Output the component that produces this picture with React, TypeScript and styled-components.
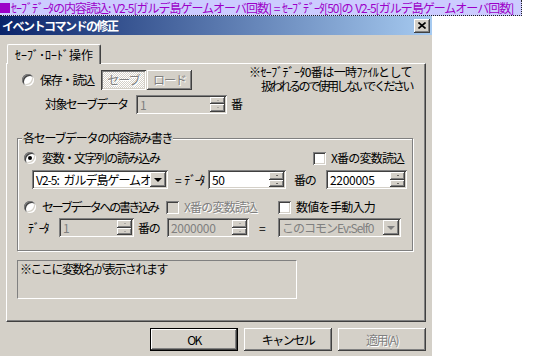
import styled, { createGlobalStyle } from 'styled-components';

const FACE = '#d4d0c8';
const SHADOW = '#808080';
const DARK = '#404040';

const raisedEdge = `
  box-shadow: inset -1px -1px 0 ${DARK}, inset 1px 1px 0 #fff, inset -2px -2px 0 ${SHADOW}, inset 2px 2px 0 ${FACE};
`;
const sunkenEdge = `
  box-shadow: inset 1px 1px 0 ${SHADOW}, inset -1px -1px 0 #fff, inset 2px 2px 0 ${DARK}, inset -2px -2px 0 ${FACE};
`;
const pressedEdge = `
  box-shadow: inset 1px 1px 0 ${DARK}, inset -1px -1px 0 #fff, inset 2px 2px 0 ${SHADOW}, inset -2px -2px 0 ${FACE};
`;
const disabledText = `
  color: ${SHADOW};
  text-shadow: 1px 1px 0 #fff;
`;

const GlobalStyle = createGlobalStyle`
  html, body {
    margin: 0;
    padding: 0;
    background: #fff;
  }
  body {
    font-family: "Noto Sans CJK JP", "Noto Sans", sans-serif;
    font-size: 12px;
    line-height: 14px;
    color: #000;
  }
`;

const Page = styled.div`
  width: 536px;
  height: 356px;
  overflow: hidden;
  display: flex;
  flex-direction: column;
  align-items: flex-start;
`;

const Banner = styled.div`
  box-sizing: border-box;
  width: 522px;
  height: 16px;
  display: flex;
  align-items: center;
  background: #ccccff;
  color: #9c00c8;
  border-right: 1px dotted #222;
  border-bottom: 1px dotted #222;
  letter-spacing: -1px;
  word-spacing: 1px;
  white-space: nowrap;
  overflow: hidden;
`;

const BannerMark = styled.span`
  flex: none;
  width: 10px;
  height: 10px;
  margin-right: 1px;
  background: #9c00c8;
`;

const Dialog = styled.div`
  width: 432px;
  flex: 1;
  background: ${FACE};
  display: flex;
  flex-direction: column;
`;

const TitleBar = styled.div`
  flex: none;
  height: 19px;
  display: flex;
  align-items: center;
  justify-content: space-between;
  padding: 0 2px;
  background: linear-gradient(to right, #0a246a, #a6caf0);
`;

const Title = styled.span`
  color: #fff;
  font-weight: bold;
  letter-spacing: -1.5px;
`;

const CloseButton = styled.div`
  box-sizing: border-box;
  width: 16px;
  height: 14px;
  background: ${FACE};
  ${raisedEdge}
  display: flex;
  align-items: center;
  justify-content: center;
`;

const Body = styled.div`
  padding: 9px 6px 0;
  display: flex;
  flex-direction: column;
`;

const TabStrip = styled.div`
  display: flex;
  height: 19px;
  padding-left: 1px;
`;

const Tab = styled.div`
  position: relative;
  z-index: 1;
  box-sizing: border-box;
  width: 94px;
  height: 20px;
  background: ${FACE};
  border-top: 1px solid #fff;
  border-left: 1px solid #fff;
  border-right: 1px solid ${DARK};
  box-shadow: inset -1px 0 0 ${SHADOW};
  border-radius: 2px 2px 0 0;
  display: flex;
  align-items: center;
  justify-content: center;
`;

const TabPanel = styled.div`
  box-sizing: border-box;
  width: 420px;
  height: 259px;
  border-top: 1px solid #fff;
  border-left: 1px solid #fff;
  border-right: 1px solid ${DARK};
  border-bottom: 1px solid ${DARK};
  box-shadow: inset -1px -1px 0 ${SHADOW};
  display: flex;
  flex-direction: column;
  align-items: flex-start;
`;

const TopArea = styled.div`
  display: flex;
  width: 100%;
`;

const LeftColumn = styled.div`
  flex: none;
  width: 242px;
  padding-top: 6px;
  display: flex;
  flex-direction: column;
  gap: 5px;
`;

const Note = styled.div`
  padding-top: 1px;
  display: flex;
  flex-direction: column;
  white-space: nowrap;
`;

const NoteLine = styled.span<{ $indent?: number; $ls: number }>`
  height: 14px;
  padding-left: ${(p) => p.$indent ?? 0}px;
  letter-spacing: ${(p) => p.$ls}px;
`;

const Row = styled.div<{ $indent: number; $h: number; $top?: number }>`
  display: flex;
  align-items: center;
  height: ${(p) => p.$h}px;
  padding-left: ${(p) => p.$indent}px;
  margin-top: ${(p) => p.$top ?? 0}px;
`;

const Label = styled.span<{ $w?: number; $pad?: number; $ls?: number; $disabled?: boolean }>`
  flex: none;
  box-sizing: border-box;
  width: ${(p) => (p.$w ? `${p.$w}px` : 'auto')};
  padding-left: ${(p) => p.$pad ?? 0}px;
  white-space: nowrap;
  letter-spacing: ${(p) => p.$ls ?? -1.2}px;
  word-spacing: 3px;
  ${(p) => (p.$disabled ? disabledText : '')}
`;

const Option = styled.label<{ $w?: number; $gap: number; $ls?: number; $disabled?: boolean }>`
  flex: none;
  display: flex;
  align-items: center;
  gap: ${(p) => p.$gap}px;
  width: ${(p) => (p.$w ? `${p.$w}px` : 'auto')};
  white-space: nowrap;
  letter-spacing: ${(p) => p.$ls ?? -1.2}px;
  ${(p) => (p.$disabled ? disabledText : '')}
`;

const RadioCircle = styled.span<{ $checked?: boolean }>`
  flex: none;
  box-sizing: border-box;
  width: 12px;
  height: 12px;
  border-radius: 50%;
  background: #fff;
  box-shadow: inset 1px 1px 0 ${SHADOW}, inset -1px -1px 0 #fff, inset 2px 2px 0 ${DARK},
    inset -2px -2px 0 ${FACE};
  display: flex;
  align-items: center;
  justify-content: center;

  &::after {
    content: '';
    display: ${(p) => (p.$checked ? 'block' : 'none')};
    width: 4px;
    height: 4px;
    border-radius: 50%;
    background: #000;
  }
`;

const CheckBox = styled.span<{ $disabled?: boolean }>`
  flex: none;
  box-sizing: border-box;
  width: 13px;
  height: 13px;
  background: ${(p) => (p.$disabled ? FACE : '#fff')};
  ${sunkenEdge}
`;

const ButtonPair = styled.div`
  display: flex;
  gap: 1px;
`;

const SmallButton = styled.div<{ $pressed?: boolean }>`
  box-sizing: border-box;
  width: 45px;
  height: 20px;
  display: flex;
  align-items: center;
  justify-content: center;
  letter-spacing: -1px;
  ${disabledText}
  background: ${(p) =>
    p.$pressed ? `repeating-conic-gradient(#fff 0 25%, ${FACE} 0 50%) 0 0 / 2px 2px` : FACE};
  ${(p) => (p.$pressed ? pressedEdge : raisedEdge)}
`;

const Field = styled.div<{ $w: number; $disabled?: boolean }>`
  flex: none;
  box-sizing: border-box;
  width: ${(p) => p.$w}px;
  height: 19px;
  padding: 2px;
  display: flex;
  background: ${(p) => (p.$disabled ? FACE : '#fff')};
  ${sunkenEdge}
`;

const FieldText = styled.span<{ $disabled?: boolean }>`
  flex: 1;
  min-width: 0;
  overflow: hidden;
  white-space: nowrap;
  padding-left: 2px;
  line-height: 15px;
  letter-spacing: -0.3px;
  color: ${(p) => (p.$disabled ? SHADOW : '#000')};
`;

const ComboText = styled(FieldText)`
  letter-spacing: -1px;
  word-spacing: 3px;
`;

const SpinButtons = styled.div`
  flex: none;
  width: 15px;
  display: flex;
  flex-direction: column;
`;

const SpinButton = styled.div`
  flex: 1;
  background: ${FACE};
  ${raisedEdge}
  display: flex;
  align-items: center;
  justify-content: center;
`;

const SpinArrow = styled.span<{ $up?: boolean; $disabled?: boolean }>`
  width: 0;
  height: 0;
  border-left: 1px solid transparent;
  border-right: 1px solid transparent;
  ${(p) =>
    p.$up
      ? `border-bottom: 1px solid ${p.$disabled ? SHADOW : '#000'};`
      : `border-top: 1px solid ${p.$disabled ? SHADOW : '#000'};`}
`;

const DropButton = styled.div`
  flex: none;
  width: 16px;
  background: ${FACE};
  ${raisedEdge}
  display: flex;
  align-items: center;
  justify-content: center;
`;

const DropArrow = styled.span<{ $disabled?: boolean }>`
  width: 0;
  height: 0;
  border-left: 4px solid transparent;
  border-right: 4px solid transparent;
  border-top: 4px solid ${(p) => (p.$disabled ? SHADOW : '#000')};
`;

const Group = styled.div`
  position: relative;
  box-sizing: border-box;
  width: 396px;
  height: 113px;
  margin: 25px 0 0 10px;
  padding-top: 12px;
  border: 1px solid ${SHADOW};
  box-shadow: inset 1px 1px 0 #fff, 1px 1px 0 #fff;
  display: flex;
  flex-direction: column;
`;

const Legend = styled.span`
  position: absolute;
  top: -8px;
  left: 4px;
  padding: 0 1px;
  background: ${FACE};
  letter-spacing: -1.3px;
  white-space: nowrap;
`;

const InfoBox = styled.div`
  box-sizing: border-box;
  width: 280px;
  height: 39px;
  margin: 9px 0 0 10px;
  padding: 1px 2px;
  border: 1px solid ${SHADOW};
  border-right-color: #fff;
  border-bottom-color: #fff;
  letter-spacing: -1.5px;
`;

const ButtonRow = styled.div`
  display: flex;
  justify-content: flex-end;
  gap: 6px;
  margin-top: 6px;
`;

const PushButton = styled.div<{ $default?: boolean; $disabled?: boolean }>`
  box-sizing: border-box;
  width: 88px;
  height: 23px;
  display: flex;
  align-items: center;
  justify-content: center;
  background: ${FACE};
  letter-spacing: -1.5px;
  border: ${(p) => (p.$default ? '1px solid #000' : 'none')};
  ${raisedEdge}
  ${(p) => (p.$disabled ? disabledText : '')}
`;

type FieldProps = { value: string; width: number; disabled?: boolean };

const Spin = ({ value, width, disabled }: FieldProps) => (
  <Field $w={width} $disabled={disabled}>
    <FieldText $disabled={disabled}>{value}</FieldText>
    <SpinButtons>
      <SpinButton>
        <SpinArrow $up $disabled={disabled} />
      </SpinButton>
      <SpinButton>
        <SpinArrow $disabled={disabled} />
      </SpinButton>
    </SpinButtons>
  </Field>
);

const Combo = ({ value, width, disabled }: FieldProps) => (
  <Field $w={width} $disabled={disabled}>
    <ComboText $disabled={disabled}>{value}</ComboText>
    <DropButton>
      <DropArrow $disabled={disabled} />
    </DropButton>
  </Field>
);

const App = () => {
  return (
    <Page>
      <GlobalStyle />
      <Banner>
        <BannerMark />
        ｾｰﾌﾞﾃﾞｰﾀの内容読込: V2-5[ガルデ島ゲームオーバ回数] = ｾｰﾌﾞﾃﾞｰﾀ[50]の V2-5[ガルデ島ゲームオーバ回数]
      </Banner>
      <Dialog>
        <TitleBar>
          <Title>イベントコマンドの修正</Title>
          <CloseButton>
            <svg width="8" height="7" viewBox="0 0 8 7">
              <path d="M0.5 0.5 L7.5 6.5 M7.5 0.5 L0.5 6.5" stroke="#000" strokeWidth="1.6" />
            </svg>
          </CloseButton>
        </TitleBar>
        <Body>
          <TabStrip>
            <Tab>ｾｰﾌﾞ･ﾛｰﾄﾞ操作</Tab>
          </TabStrip>
          <TabPanel>
            <TopArea>
              <LeftColumn>
                <Row $indent={15} $h={20}>
                  <Option $w={79} $gap={6}>
                    <RadioCircle />
                    保存・読込
                  </Option>
                  <ButtonPair>
                    <SmallButton $pressed>セーブ</SmallButton>
                    <SmallButton>ロード</SmallButton>
                  </ButtonPair>
                </Row>
                <Row $indent={38} $h={18}>
                  <Label $w={91} $ls={-1.6}>対象セーブデータ</Label>
                  <Spin value="1" width={91} disabled />
                  <Label $pad={4}>番</Label>
                </Row>
              </LeftColumn>
              <Note>
                <NoteLine $ls={-0.6}>※ｾｰﾌﾞﾃﾞｰﾀ0番は一時ﾌｧｲﾙとして</NoteLine>
                <NoteLine $indent={12} $ls={-2.5}>
                  扱われるので使用しないでください
                </NoteLine>
              </Note>
            </TopArea>

            <Group>
              <Legend>各セーブデータの内容読み書き</Legend>
              <Row $indent={6} $h={14}>
                <Option $w={289} $gap={6} $ls={-1.3}>
                  <RadioCircle $checked />
                  変数・文字列の読み込み
                </Option>
                <Option $gap={5} $ls={-0.8}>
                  <CheckBox />
                  X番の変数読込
                </Option>
              </Row>
              <Row $indent={14} $h={19} $top={5}>
                <Combo value="V2-5: ガルデ島ゲームオーバ回数" width={136} />
                <Label $w={40} $pad={7} $ls={-1.5}>= ﾃﾞｰﾀ</Label>
                <Spin value="50" width={78} />
                <Label $w={40} $pad={8}>番の</Label>
                <Spin value="2200005" width={81} />
              </Row>
              <Row $indent={6} $h={14} $top={11}>
                <Option $w={142} $gap={6} $ls={-2.3}>
                  <RadioCircle />
                  セーブデータへの書き込み
                </Option>
                <Option $w={112} $gap={5} $ls={-0.8} $disabled>
                  <CheckBox $disabled />
                  X番の変数読込
                </Option>
                <Option $gap={5} $ls={-0.7}>
                  <CheckBox />
                  数値を手動入力
                </Option>
              </Row>
              <Row $indent={10} $h={19} $top={4}>
                <Label $w={31} $ls={-1.2}>ﾃﾞｰﾀ</Label>
                <Spin value="1" width={75} disabled />
                <Label $w={33} $pad={4}>番の</Label>
                <Spin value="2000000" width={82} disabled />
                <Label $w={29} $pad={10}>=</Label>
                <Combo value="このコモンEv:Self0" width={123} disabled />
              </Row>
            </Group>

            <InfoBox>※ここに変数名が表示されます</InfoBox>
          </TabPanel>
          <ButtonRow>
            <PushButton $default>OK</PushButton>
            <PushButton>キャンセル</PushButton>
            <PushButton $disabled>適用(A)</PushButton>
          </ButtonRow>
        </Body>
      </Dialog>
    </Page>
  );
};

export default App;
